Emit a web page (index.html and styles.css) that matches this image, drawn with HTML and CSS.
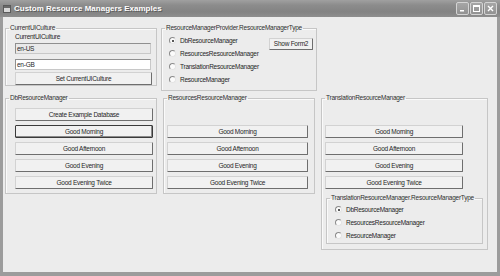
FILE: index.html
```html
<!DOCTYPE html>
<html>
<head>
  <title>Custom Resource Managers Examples</title>
  <link rel="stylesheet" href="styles.css">
</head>
<body>
  <div class="window">
    <div class="titlebar">
      <svg class="app-icon" width="8" height="8" viewBox="0 0 8 8">
        <rect x="0.5" y="0.5" width="7" height="7" fill="#d8d8d8" stroke="#5a5a5a"/>
        <rect x="1" y="1" width="6" height="2" fill="#6a6a6a"/>
      </svg>
      <span class="title">Custom Resource Managers Examples</span>
      <div class="caption-buttons">
        <span class="cap-btn">
          <svg width="11" height="11" viewBox="0 0 11 11"><rect x="3" y="7" width="4" height="1.5" fill="#fff"/></svg>
        </span>
        <span class="cap-btn">
          <svg width="11" height="11" viewBox="0 0 11 11"><rect x="2.5" y="2.5" width="6" height="6" fill="none" stroke="#fff"/><rect x="2.5" y="2.5" width="6" height="1.5" fill="#fff"/></svg>
        </span>
        <span class="cap-btn">
          <svg width="11" height="11" viewBox="0 0 11 11"><path d="M3 3 L8 8 M8 3 L3 8" stroke="#fff" stroke-width="1.4"/></svg>
        </span>
      </div>
    </div>

    <div class="frame">
      <div class="client">

        <fieldset class="group culture">
          <legend>CurrentUICulture</legend>
          <div class="group-body">
            <div class="field-label">CurrentUICulture</div>
            <div class="textbox readonly">en-US</div>
            <div class="textbox editable">en-GB</div>
            <div class="button">Set CurrentUICulture</div>
          </div>
        </fieldset>

        <fieldset class="group provider">
          <legend>ResourceManagerProvider.ResourceManagerType</legend>
          <div class="group-body">
            <div class="radio-list">
              <div class="radio-row"><span class="radio checked"></span>DbResourceManager</div>
              <div class="radio-row"><span class="radio"></span>ResourcesResourceManager</div>
              <div class="radio-row"><span class="radio"></span>TranslationResourceManager</div>
              <div class="radio-row"><span class="radio"></span>ResourceManager</div>
            </div>
            <div class="button show-form">Show Form2</div>
          </div>
        </fieldset>

        <fieldset class="group db">
          <legend>DbResourceManager</legend>
          <div class="group-body button-stack">
            <div class="button">Create Example Database</div>
            <div class="button default">Good Morning</div>
            <div class="button">Good Afternoon</div>
            <div class="button">Good Evening</div>
            <div class="button">Good Evening Twice</div>
          </div>
        </fieldset>

        <fieldset class="group resources">
          <legend>ResourcesResourceManager</legend>
          <div class="group-body button-stack">
            <div class="button">Good Morning</div>
            <div class="button">Good Afternoon</div>
            <div class="button">Good Evening</div>
            <div class="button">Good Evening Twice</div>
          </div>
        </fieldset>

        <fieldset class="group translation">
          <legend>TranslationResourceManager</legend>
          <div class="group-body">
            <div class="button-stack">
              <div class="button">Good Morning</div>
              <div class="button">Good Afternoon</div>
              <div class="button">Good Evening</div>
              <div class="button">Good Evening Twice</div>
            </div>
            <fieldset class="group inner-type">
              <legend>TranslationResourceManager.ResourceManagerType</legend>
              <div class="group-body radio-list">
                <div class="radio-row"><span class="radio checked"></span>DbResourceManager</div>
                <div class="radio-row"><span class="radio"></span>ResourcesResourceManager</div>
                <div class="radio-row"><span class="radio"></span>ResourceManager</div>
              </div>
            </fieldset>
          </div>
        </fieldset>

      </div>
    </div>
  </div>
</body>
</html>
```

FILE: styles.css
```css
body {
  margin: 0;
  padding: 0;
  font-family: "Liberation Sans", Arial, sans-serif;
  font-size: 6.5px;
  letter-spacing: -0.25px;
  color: #262626;
}

.window {
  width: 500px;
  height: 276px;
  display: flex;
  flex-direction: column;
  background-color: #ececec;
}

/* title bar */
.titlebar {
  height: 17px;
  flex-shrink: 0;
  display: flex;
  align-items: center;
  padding: 0 3px 0 3px;
  background: linear-gradient(#a0a0a0, #8c8c8c 30%, #838383 70%, #8e8e8e);
}

.app-icon {
  margin-right: 3px;
}

.title {
  color: white;
  font-weight: bold;
  font-size: 8px;
  letter-spacing: 0;
  text-shadow: 1px 1px 0 #5c5c5c;
}

.caption-buttons {
  margin-left: auto;
  display: flex;
  gap: 1px;
}

.cap-btn {
  width: 11px;
  height: 11px;
  border: 0.5px solid #d4d4d4;
  border-radius: 2px;
  background: linear-gradient(#a6a6a6, #929292);
  display: flex;
}

/* window body */
.frame {
  flex: 1;
  border-left: 3px solid #9c9c9c;
  border-right: 3px solid #9c9c9c;
  border-bottom: 4px solid #9c9c9c;
}

.client {
  display: grid;
  grid-template-columns: 152px 156px 167px;
  column-gap: 4px;
  row-gap: 3px;
  align-items: start;
  padding: 7px 0 0 2px;
}

/* group boxes */
.group {
  margin: 0;
  padding: 0;
  min-width: 0;
  border: 1px solid #c6c6c6;
  box-shadow: inset 1px 1px 0 #fafafa;
}

.group legend {
  margin-left: 3px;
  padding: 0 1px;
  line-height: 8px;
  white-space: nowrap;
  color: #2e2e2e;
}

.culture .group-body {
  padding: 1px 4px 0 9px;
}

.field-label {
  line-height: 8px;
}

.textbox {
  height: 9px;
  margin-right: 1px;
  padding-left: 1px;
  line-height: 9px;
  border: 1px solid #8f8f8f;
  border-right-color: #c8c8c8;
  border-bottom-color: #c8c8c8;
}

.textbox.readonly {
  margin-top: 2px;
  background-color: #e9e9e9;
}

.textbox.editable {
  margin-top: 5px;
  background-color: white;
}

.culture .button {
  margin-top: 2px;
}

.provider {
  grid-column: 2;
  height: 65px;
}

.provider .group-body {
  display: flex;
  justify-content: space-between;
  padding: 2px 3px 0 7px;
}

.radio-row {
  height: 13px;
  display: flex;
  align-items: center;
  gap: 4px;
  white-space: nowrap;
}

.radio {
  width: 5px;
  height: 5px;
  border: 1px solid #8a8a8a;
  border-right-color: #e4e4e4;
  border-bottom-color: #e4e4e4;
  border-radius: 50%;
  background-color: #fbfbfb;
  display: flex;
  align-items: center;
  justify-content: center;
}

.radio.checked::after {
  content: "";
  width: 2px;
  height: 2px;
  border-radius: 50%;
  background-color: #222;
}

/* buttons */
.button {
  height: 11px;
  line-height: 11px;
  text-align: center;
  white-space: nowrap;
  background-color: #f1f1f1;
  border: 1px solid #d2d2d2;
  border-right-color: #6e6e6e;
  border-bottom-color: #6e6e6e;
  border-radius: 1px;
}

.button.default {
  border-color: #3a3a3a;
  box-shadow: inset -1px -1px 0 #8a8a8a;
}

.show-form {
  width: 42px;
  height: 10px;
  line-height: 10px;
  margin-top: 4px;
}

.button-stack {
  display: flex;
  flex-direction: column;
  gap: 4px;
}

.db {
  grid-column: 1;
}

.db .group-body {
  padding: 6px 3px 4px 9px;
}

.resources {
  margin: 0 2px;
}

.resources .group-body {
  padding: 23px 6px 4px 3px;
}

.translation .group-body {
  padding: 23px 4px 5px 3px;
}

.translation .button-stack {
  margin-right: 20px;
}

.inner-type {
  margin: 5px 0 0 1px;
}

.inner-type .group-body {
  padding: 1px 0 1px 8px;
}
```
